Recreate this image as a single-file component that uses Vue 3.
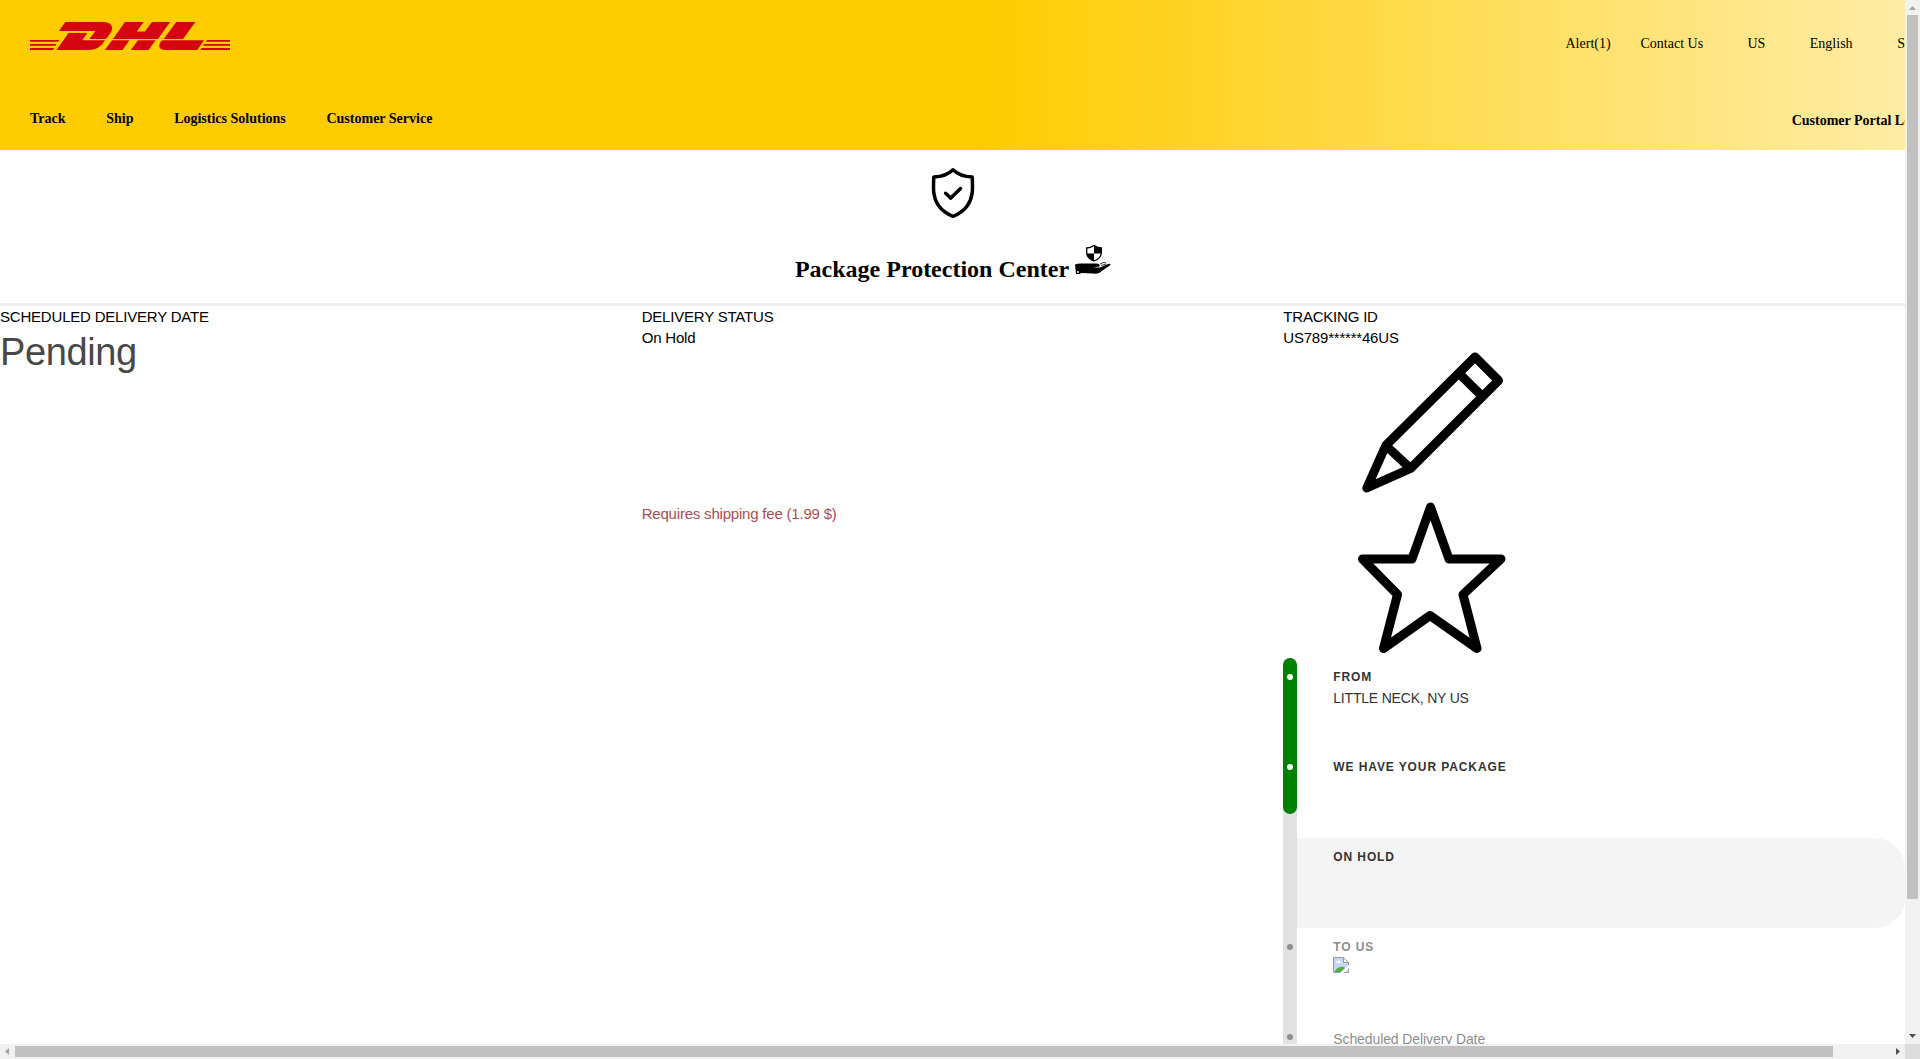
<script setup>
const mainLinks = ['Track', 'Ship', 'Logistics Solutions', 'Customer Service']
const steps = [
  { title: 'FROM', detail: 'LITTLE NECK, NY US', state: 'done' },
  { title: 'WE HAVE YOUR PACKAGE', state: 'done' },
  { title: 'ON HOLD', state: 'current' },
  { title: 'TO US', state: 'todo', image: true },
  { detail: 'Scheduled Delivery Date', state: 'todo last' }
]
</script>

<template>
  <div class="window">
    <div class="page">
      <header class="header">
        <div class="top">
          <svg class="logo" viewBox="0 0 200 28" fill="#d40511">
            <path d="M35.300 0H73C81 0 84 5 81 10C79 13.500 77.500 15.500 75.500 17H61.500C59.300 17 59.800 16.200 60.400 15.400L64.600 10.200C65.300 9.200 65 8.900 63.800 8.900H29Z" />
            <path d="M38.500 11H55.500C57 11 57 11.700 56.500 12.500L53 17C52.300 18 53 18.300 54.500 18.300H75C71.500 24 67 28 58 28H26.500Z" />
            <path d="M95 0H113.600L106.800 9.600H115L121.900 0H140.200L127.900 17H83Z" />
            <path d="M82 18.300H99.500L92.500 28H74.800ZM108 18.300H125.600L118.600 28H100.800Z" />
            <path d="M146.200 0H165.400L153 17H133.700ZM132 18.300H174L167.300 28H136C129 28 127 24 132 18.300Z" />
            <path d="M0 18.100H29.300L28.100 19.800H0ZM0 22H26.600L25.400 23.800H0ZM0 26H24.200L23 28H0Z" />
            <path d="M177 18.100H200V19.800H175.800ZM174.200 22H200V23.800H173ZM171.500 26H200V28H170.300Z" />
          </svg>
          <nav class="meta">
            <a class="alert">Alert(1)</a><a class="contact">Contact Us</a><a class="country">US</a><a class="language">English</a><a>Search</a>
          </nav>
        </div>
        <div class="bottom">
          <nav class="main-nav"><a v-for="l in mainLinks" :key="l">{{ l }}</a></nav>
          <a class="portal">Customer Portal Login</a>
        </div>
      </header>

      <section class="hero">
        <svg class="shield" viewBox="0 0 44 52" fill="none" stroke="#000" stroke-width="3.500" stroke-linejoin="round" stroke-linecap="round">
          <path d="M22 2.800C17 7.800 10.500 9.800 2.800 10C2.200 21 1.700 30 7.500 38.500C11 43.500 16 47 22 49.300C28 47 33 43.500 36.500 38.500C42.300 30 41.800 21 41.200 10C33.500 9.800 27 7.800 22 2.800Z" />
          <path d="M14.600 26.300L19.800 31.100L29.500 21.500" />
        </svg>
        <h1>
          <span>Package Protection Center</span>
          <svg class="hand" viewBox="0 0 36 31">
            <path d="M19 1.500Q22.500 4 26.300 4V9Q26 14.500 19 17Q12 14.500 11.700 9V4Q15.500 4 19 1.500Z" fill="#fff" stroke="#000" stroke-width="1.300" />
            <path d="M19 1V9.500H26.500V4Q22 3.500 19 1ZM19 9.500V17Q12 15 11.700 9.500Z" />
            <path d="M0 20.500Q3 19 8 19.500H22Q25.500 20 24.500 22.500L18 23.600H25L33 20Q35.800 19.200 35.500 21L24 29Q22 30 18 29.500L6 29L5 30H1Z" />
            <path d="M25 20L29 18.300L31 19.200M26 21.500L31 20" fill="none" stroke="#000" stroke-width=".8" />
            <circle cx="3" cy="28" r="1" fill="#fff" />
          </svg>
        </h1>
      </section>

      <main class="columns">
        <section>
          <p>SCHEDULED DELIVERY DATE</p>
          <p class="pending">Pending</p>
        </section>
        <section>
          <p>DELIVERY STATUS</p>
          <p>On Hold</p>
          <p class="fee">Requires shipping fee (1.99 $)</p>
        </section>
        <section>
          <p>TRACKING ID</p>
          <p>US789******46US</p>
          <div class="icons">
            <svg viewBox="0 0 300 150" fill="none" stroke="#000" stroke-width="9" stroke-linejoin="round" stroke-linecap="round">
              <path d="M192 7L215.500 30.500L127.500 118.500L83.800 138L102.800 95.500ZM175.800 23.200L199.500 46.500M102.800 95.500L127.500 118.500" />
            </svg>
            <svg viewBox="0 0 300 150" fill="none" stroke="#000" stroke-width="9" stroke-linejoin="round" stroke-linecap="round">
              <path d="M147.500 7L166 59H218L180 94.500L194 148.500L147 115.500L100.500 148.500L114.500 94.500L79.500 59H129Z" />
            </svg>
          </div>
          <div class="timeline">
            <div class="rail"><div class="progress"></div></div>
            <ol>
              <li v-for="(s, i) in steps" :key="i" :class="s.state">
                <strong v-if="s.title">{{ s.title }}</strong>
                <span v-if="s.detail">{{ s.detail }}</span>
                <svg v-if="s.image" class="broken" viewBox="0 0 16 16">
                  <path d="M.5 .5H10.500L15.500 5.500V15.500H.5Z" fill="#c6d8f5" stroke="#9b9b9b" />
                  <path d="M10.500 .5V5.500H15.500Z" fill="#fff" stroke="#9b9b9b" />
                  <path d="M3 6Q3 4.500 4.500 4.500Q5 2.800 6.500 3.500Q8 4 7.800 6Z" fill="#fff" />
                  <path d="M1.500 15Q3 11 7 10Q10 9 12 11L8 15Z" fill="#57ad3c" />
                  <path d="M7 16L16 8V11L11 16Z" fill="#fff" />
                </svg>
              </li>
            </ol>
          </div>
        </section>
      </main>
    </div>

    <div class="vbar">
      <svg viewBox="0 0 15 15"><path d="M4 10H11L7.500 6Z" fill="#a3a3a3" /></svg>
      <div class="vtrack"><div class="vthumb"></div></div>
      <svg viewBox="0 0 15 15"><path d="M4 5H11L7.500 9Z" fill="#505050" /></svg>
    </div>
    <div class="hbar">
      <svg viewBox="0 0 15 15"><path d="M9 4V11L5 7.500Z" fill="#a3a3a3" /></svg>
      <div class="htrack"><div class="hthumb"></div></div>
      <svg viewBox="0 0 15 15"><path d="M6 4V11L10 7.500Z" fill="#505050" /></svg>
    </div>
    <div class="corner"></div>
  </div>
</template>

<style>
html, body { margin: 0; overflow: hidden; background: #fff; }
</style>
<style scoped>
.window { display: grid; grid-template-columns: 1905px 15px; grid-template-rows: 1044px 15px; width: 1920px; height: 1059px; overflow: hidden; }
.page { overflow: hidden; min-width: 0; font-family: "Liberation Serif", serif; color: #000; }
.header { width: 1965px; height: 150px; background: linear-gradient(90deg, #fc0 0, #fc0 50%, #ffeeb0); font-size: 14px; line-height: 16px; }
.top { display: flex; height: 105px; }
.logo { width: 200px; height: 28px; margin: 22px 0 0 30px; }
.meta { display: flex; margin: 36px 0 0 1335.500px; white-space: nowrap; }
.alert { width: 75px; }
.contact { width: 107px; }
.country { width: 62.300px; }
.language { width: 87.500px; }
.bottom { display: flex; font-weight: bold; white-space: nowrap; }
.main-nav { display: flex; gap: 40.700px; width: 1761.700px; margin-left: 30px; padding-top: 6px; }
.portal { padding-top: 8px; }
.hero { display: flex; flex-direction: column; align-items: center; height: 153px; border-bottom: 3px solid #eee; }
.shield { width: 44px; height: 52px; margin-top: 17px; }
h1 { display: flex; margin: 25px 0 0; font-size: 24px; line-height: 28px; gap: 6px; white-space: nowrap; }
h1 span { margin: 11px 0 0 1px; }
.hand { width: 36px; height: 31px; }
.columns { display: grid; grid-template-columns: 641.700px 641.600px 621.700px; font: 15px/21px "Liberation Sans", sans-serif; letter-spacing: -.2px; }
p { margin: 0; white-space: nowrap; }
.pending { font-size: 38px; line-height: 50px; letter-spacing: -.4px; color: #484848; }
.fee { margin-top: 155px; color: #a94c4f; }
.icons { display: flex; flex-direction: column; box-sizing: border-box; width: 300px; height: 310px; padding-top: 2px; }
.icons svg { width: 300px; height: 150px; flex: none; overflow: visible; }
.timeline { display: flex; height: 450px; }
.rail { width: 14px; background: #e2e2e2; border-radius: 7px 7px 0 0; }
.progress { height: 156px; border-radius: 7px; background: green; }
ol { list-style: none; margin: 0; padding: 0; flex: 1; }
li { position: relative; display: flex; flex-direction: column; box-sizing: border-box; height: 90px; padding: 9px 0 0 36px; color: #333; font-size: 14px; }
li strong { font-size: 12px; letter-spacing: .9px; }
li::before { content: ""; position: absolute; left: -10px; top: 16px; width: 6px; height: 6px; border-radius: 50%; background: #fff; }
.current { background: #f4f4f4; border-radius: 0 30px 30px 0; }
.current::before { display: none; }
.todo { color: #8d8d8d; }
.todo::before { background: #8d8d8d; }
.last { padding-top: 11px; letter-spacing: -.1px; }
.broken { width: 16px; height: 16px; margin-top: -1px; }
.vbar { background: #f1f1f1; display: flex; flex-direction: column; }
.vbar > svg, .hbar > svg { width: 15px; height: 15px; flex: none; }
.vtrack { flex: 1; }
.vthumb { height: 884px; margin: 0 2px; background: #c1c1c1; }
.hbar { background: #f1f1f1; display: flex; }
.htrack { flex: 1; }
.hthumb { width: 1818px; height: 11px; margin: 2px 0; background: #c1c1c1; }
.corner { background: #dcdcdc; }
</style>
